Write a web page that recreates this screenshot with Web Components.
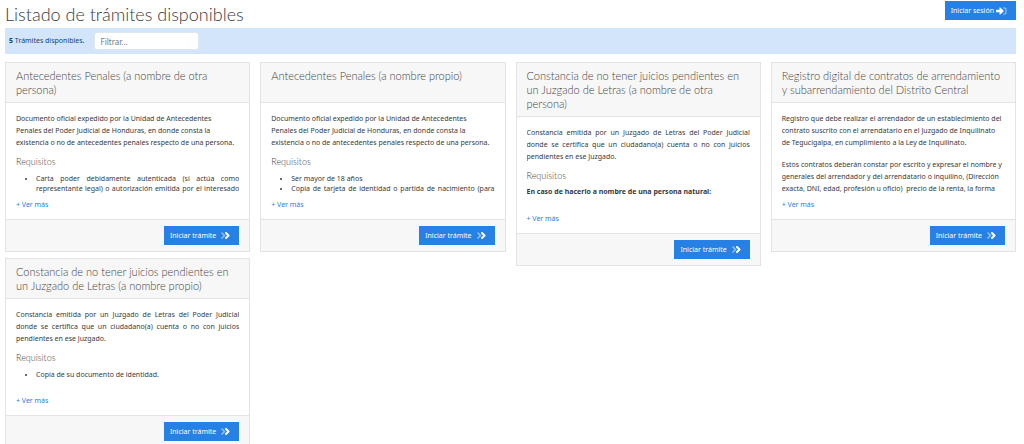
<!DOCTYPE html>
<html lang="es">
<head>
<meta charset="utf-8">
<meta name="viewport" content="width=device-width, initial-scale=1">
<title>Listado de trámites disponibles</title>
<style>
  body {
    margin: 0;
    background: #fff;
    color: #373a3c;
    font: 7px/12px "Noto Sans", "Open Sans", sans-serif;
  }
</style>
</head>
<body>
<tramites-page></tramites-page>

<script>
/**
 * Solid blue button with an icon after the label
 *
 * <action-button icon="next|login">Label</action-button>
 */
class ActionButton extends HTMLElement {
  constructor() {
    super();
    this.attachShadow({ mode: 'open' });
  }

  connectedCallback() {
    const icons = {
      next: `
        <svg width="9" height="7" viewBox="0 0 18 14" fill="none" stroke="#fff" stroke-linecap="round" stroke-linejoin="round">
          <path d="M2 2l5 5-5 5" stroke-width="3" opacity=".5"/>
          <path d="M10 2l5 5-5 5" stroke-width="4"/>
        </svg>`,
      login: `
        <svg width="11" height="8" viewBox="0 0 22 16">
          <path d="M15 2h3a2 2 0 0 1 2 2v8a2 2 0 0 1-2 2h-3" fill="none" stroke="#fff" stroke-width="2" stroke-linecap="round" opacity=".6"/>
          <path d="M1 5.500h6V2q0-2 1.500-1l6.500 6q1 1 0 2l-6.500 6Q7 16 7 14v-3.500H1q-1 0-1-1v-3q0-1 1-1z" fill="#fff"/>
        </svg>`,
    };

    this.shadowRoot.innerHTML = `
      <style>
        :host {
          display: block;
        }

        button {
          display: flex;
          align-items: center;
          gap: 5px;
          height: 19px;
          padding: 0 9px 0 6px;
          border: 0;
          background: #2780e3;
          color: #fff;
          font: inherit;
          white-space: nowrap;
          cursor: pointer;
        }

        :host([icon="login"]) button {
          gap: 2px;
        }

        button:hover {
          background: #1a6dca;
        }

        svg {
          display: block;
        }
      </style>
      <button type="button"><slot></slot>${icons[this.getAttribute('icon')] || ''}</button>
    `;
  }
}

/**
 * Blue strip with the number of results and the filter box
 */
class FilterBar extends HTMLElement {
  constructor() {
    super();
    this.attachShadow({ mode: 'open' });
  }

  connectedCallback() {
    this.shadowRoot.innerHTML = `
      <style>
        :host {
          display: flex;
          align-items: center;
          gap: 10px;
          padding: 4px;
          background: #d3e5fa;
          color: #144374;
        }

        input {
          box-sizing: border-box;
          width: 105px;
          height: 18px;
          padding: 0 5px;
          border: 1px solid #dfe7ef;
          border-radius: 3px;
          background: #fff;
          color: #373a3c;
          font: inherit;
          font-size: 8px;
        }

        input::placeholder {
          color: #777;
          opacity: 1;
        }
      </style>
      <label for="filter"><b>${this.getAttribute('count')}</b> Trámites disponibles.</label>
      <input id="filter" type="text" placeholder="Filtrar...">
    `;
  }
}

/**
 * Card of one procedure
 *
 * <tramite-card heading="Title">description and requirements</tramite-card>
 */
class TramiteCard extends HTMLElement {
  constructor() {
    super();
    this.attachShadow({ mode: 'open' });
  }

  connectedCallback() {
    this.shadowRoot.innerHTML = `
      <style>
        :host {
          display: block;
          border: 1px solid #e3e3e3;
          background: #fff;
        }

        header {
          min-height: 28px;
          padding: 6px 10px 5px;
          border-bottom: 1px solid #e3e3e3;
          background: #f7f7f7;
        }

        h2 {
          margin: 0;
          color: #444;
          font-family: Lato, "Open Sans", sans-serif;
          font-size: 11px;
          font-weight: 300;
          line-height: 14px;
        }

        .body {
          padding: 10px 10px 8px;
        }

        .text {
          height: 80px;
          margin-bottom: 6px;
          overflow: hidden;
        }

        a {
          color: #2780e3;
          text-decoration: none;
        }

        a:hover {
          text-decoration: underline;
        }

        .more {
          display: block;
        }

        footer {
          display: flex;
          justify-content: flex-end;
          padding: 6px 10px;
          border-top: 1px solid #e3e3e3;
          background: #f7f7f7;
        }

        ::slotted(p) {
          margin: 0 0 10px;
        }

        ::slotted(p.justify) {
          text-align: justify;
        }

        ::slotted(h3) {
          margin: -3px 0 4px;
          color: #444;
          font-family: Lato, "Open Sans", sans-serif;
          font-size: 9px;
          font-weight: 300;
          line-height: 12px;
        }

        ::slotted(ul) {
          margin: 6px 0 0;
          padding-left: 20px;
          line-height: 10px;
          text-align: justify;
        }
      </style>
      <header><h2>${this.getAttribute('heading')}</h2></header>
      <div class="body">
        <div class="text"><slot></slot></div>
        <a class="more" href="#">+ Ver más</a>
      </div>
      <footer><action-button icon="next">Iniciar trámite</action-button></footer>
    `;
  }
}

class TramitesPage extends HTMLElement {
  constructor() {
    super();
    this.attachShadow({ mode: 'open' });
  }

  connectedCallback() {
    this.shadowRoot.innerHTML = `
      <style>
        :host {
          display: block;
          padding: 1px 8px 0 5px;
        }

        .top {
          display: flex;
          justify-content: space-between;
          align-items: flex-start;
        }

        h1 {
          margin: 0;
          color: #373a3c;
          font-family: Lato, "Open Sans", sans-serif;
          font-size: 18px;
          font-weight: 300;
          line-height: 27px;
        }

        .columns {
          display: flex;
          align-items: flex-start;
          gap: 10px;
          margin-top: 8px;
        }

        .column {
          display: flex;
          flex: 1;
          flex-direction: column;
          gap: 6px;
          min-width: 0;
        }

        .full {
          text-align-last: justify;
        }
      </style>

      <div class="top">
        <h1>Listado de trámites disponibles</h1>
        <action-button icon="login">Iniciar sesión</action-button>
      </div>

      <filter-bar count="5"></filter-bar>

      <div class="columns">
        <div class="column">
          <tramite-card heading="Antecedentes Penales (a nombre de otra persona)">
            <p>Documento oficial expedido por la Unidad de Antecedentes<br>Penales del Poder Judicial de Honduras, en donde consta la<br>existencia o no de antecedentes penales respecto de una persona.</p>
            <h3>Requisitos</h3>
            <ul><li class="full">Carta poder debidamente autenticada (si actúa como representante legal) o autorización emitida por el interesado</li></ul>
          </tramite-card>
          <tramite-card heading="Constancia de no tener juicios pendientes en un Juzgado de Letras (a nombre propio)">
            <p class="justify">Constancia emitida por un Juzgado de Letras del Poder Judicial donde se certifica que un ciudadano(a) cuenta o no con juicios pendientes en ese Juzgado.</p>
            <h3>Requisitos</h3>
            <ul><li>Copia de su documento de identidad.</li></ul>
          </tramite-card>
        </div>

        <div class="column">
          <tramite-card heading="Antecedentes Penales (a nombre propio)">
            <p>Documento oficial expedido por la Unidad de Antecedentes<br>Penales del Poder Judicial de Honduras, en donde consta la<br>existencia o no de antecedentes penales respecto de una persona.</p>
            <h3>Requisitos</h3>
            <ul>
              <li>Ser mayor de 18 años</li>
              <li class="full">Copia de tarjeta de identidad o partida de nacimiento (para</li>
            </ul>
          </tramite-card>
        </div>

        <div class="column">
          <tramite-card heading="Constancia de no tener juicios pendientes en un Juzgado de Letras (a nombre de otra persona)">
            <p class="justify">Constancia emitida por un Juzgado de Letras del Poder Judicial donde se certifica que un ciudadano(a) cuenta o no con juicios pendientes en ese Juzgado.</p>
            <h3>Requisitos</h3>
            <p><b>En caso de hacerlo a nombre de una persona natural:</b></p>
          </tramite-card>
        </div>

        <div class="column">
          <tramite-card heading="Registro digital de contratos de arrendamiento y subarrendamiento del Distrito Central">
            <p>Registro que debe realizar el arrendador de un establecimiento del contrato suscrito con el arrendatario en el Juzgado de Inquilinato de Tegucigalpa, en cumplimiento a la Ley de Inquilinato.</p>
            <p>Estos contratos deberán constar por escrito y expresar el nombre y generales del arrendador y del arrendatario o inquilino, (Dirección exacta, DNI, edad, profesión u oficio)&nbsp; precio de la renta, la forma</p>
          </tramite-card>
        </div>
      </div>
    `;
  }
}

customElements.define('action-button', ActionButton);
customElements.define('filter-bar', FilterBar);
customElements.define('tramite-card', TramiteCard);
customElements.define('tramites-page', TramitesPage);
</script>
</body>
</html>
